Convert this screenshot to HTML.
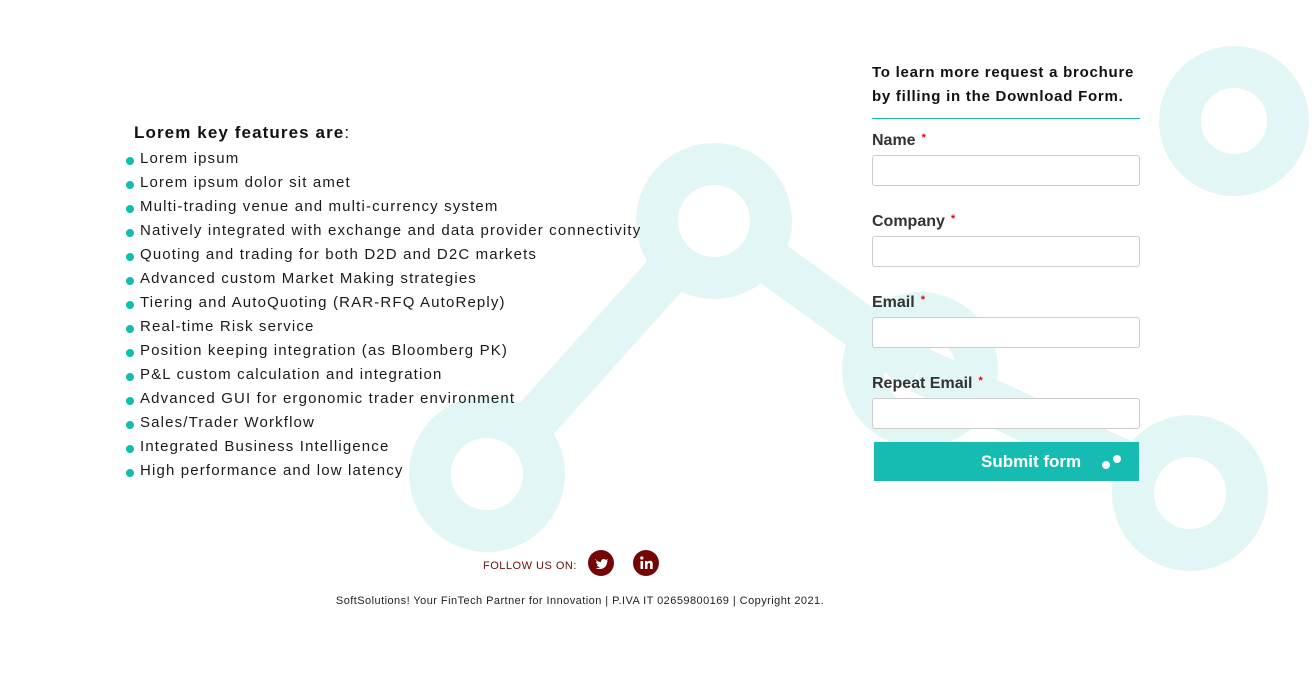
<!DOCTYPE html>
<html><head><meta charset="utf-8"><style>
body{margin:0;width:1312px;height:682px;background:#fff;position:relative;overflow:hidden;font-family:"Liberation Sans",sans-serif}
svg.bg{position:absolute;left:0;top:0}
.feat{position:absolute;left:134px;top:123px;color:#111}
.feat h3{margin:0 0 4px 0;font-size:17px;font-weight:bold;letter-spacing:1.1px}
.feat ul{list-style:none;margin:0;padding:0}
.feat li{font-size:15px;height:24px;line-height:24px;position:relative;padding-left:6px;color:#1a1a1a;letter-spacing:1.15px;white-space:nowrap}
.feat li:before{content:"";position:absolute;left:-8px;top:10px;width:8px;height:8px;border-radius:50%;background:#0fbcb0}
.form{position:absolute;left:872px;top:61px;width:268px}
.form .t{font-size:15px;font-weight:bold;line-height:24px;color:#111;padding-bottom:9px;border-bottom:1px solid #17b9ae;letter-spacing:0.75px;white-space:nowrap}
.lbl{font-size:16px;font-weight:bold;color:#333;margin-top:12px;padding-top:1px;height:22px}
.lbl span{color:#e00;font-size:11px;vertical-align:top;margin-left:6px}
.in{height:29px;border:1px solid #ccc;border-radius:3px;background:#fff;margin-top:1px;margin-bottom:26px}
.btn{position:absolute;left:874px;top:442px;width:265px;height:39px;background:#16bcb2;color:#fff;font-weight:bold;font-size:17px;line-height:39px}
.btn .x{position:absolute;left:107px}
</style></head><body>
<svg class="bg" width="1312" height="682">
<g stroke="#e2f6f5" fill="none">
<line x1="714" y1="221" x2="487" y2="474" stroke-width="46"/>
<line x1="714" y1="221" x2="920" y2="370" stroke-width="46"/>
<line x1="920" y1="370" x2="1190" y2="493" stroke-width="46"/>
<circle cx="714" cy="221" r="57" stroke-width="42"/>
<circle cx="487" cy="474" r="57" stroke-width="42"/>
<circle cx="1234" cy="121" r="54" stroke-width="42"/>
<circle cx="1190" cy="493" r="57" stroke-width="42"/>
<circle cx="920" cy="370" r="57" stroke-width="42"/>
</g>
<circle cx="714" cy="221" r="36" fill="#fff"/>
<circle cx="487" cy="474" r="36" fill="#fff"/>
<circle cx="1190" cy="493" r="36" fill="#fff"/>
</svg>
<div class="feat"><h3>Lorem key features are<span style="font-weight:normal">:</span></h3>
<ul>
<li>Lorem ipsum</li><li>Lorem ipsum dolor sit amet</li><li>Multi-trading venue and multi-currency system</li><li>Natively integrated with exchange and data provider connectivity</li><li>Quoting and trading for both D2D and D2C markets</li><li>Advanced custom Market Making strategies</li><li>Tiering and AutoQuoting (RAR-RFQ AutoReply)</li><li>Real-time Risk service</li><li>Position keeping integration (as Bloomberg PK)</li><li>P&amp;L custom calculation and integration</li><li>Advanced GUI for ergonomic trader environment</li><li>Sales/Trader Workflow</li><li>Integrated Business Intelligence</li><li>High performance and low latency</li>
</ul></div>
<div class="form">
<div class="t">To learn more request a brochure<br>by filling in the Download Form.</div>
<div class="lbl">Name<span>*</span></div><div class="in"></div>
<div class="lbl">Company<span>*</span></div><div class="in"></div>
<div class="lbl">Email<span>*</span></div><div class="in"></div>
<div class="lbl">Repeat Email<span>*</span></div><div class="in"></div>
</div>
<div class="btn"><span class="x">Submit form</span>
<svg style="position:absolute;left:226px;top:12px" width="24" height="16"><circle cx="6" cy="11" r="4" fill="#fff"/><circle cx="17" cy="5" r="4" fill="#fff"/></svg></div>
<div style="position:absolute;left:483px;top:560px;font-size:11px;color:#6b0c0c;letter-spacing:0.5px">FOLLOW US ON:</div>
<svg style="position:absolute;left:588px;top:550px" width="26" height="26"><circle cx="13" cy="13" r="13" fill="#740606"/><path d="M7 9c2 2 4 3 6 3 0-3 3-4 5-2l2-1-1 2 1 0-1 1c0 4-3 7-7 7-2 0-3 0-4-1 2 0 3 0 4-1-2 0-3-1-3-2h1c-1-1-2-2-2-3h1c-1-1-1-2-1-3z" fill="#fff"/></svg>
<svg style="position:absolute;left:633px;top:550px" width="26" height="26"><circle cx="13" cy="13" r="13" fill="#740606"/><rect x="7.5" y="11" width="2.6" height="8" fill="#fff"/><circle cx="8.8" cy="8" r="1.6" fill="#fff"/><path d="M12 11h2.5v1.2c.6-1 1.6-1.4 2.6-1.4 2 0 2.6 1.3 2.6 3.2V19h-2.6v-4.4c0-1-.3-1.6-1.2-1.6s-1.4.7-1.4 1.6V19H12z" fill="#fff"/></svg>
<div style="position:absolute;left:0;width:1160px;top:595px;text-align:center;font-size:11px;color:#222;letter-spacing:0.45px">SoftSolutions! Your FinTech Partner for Innovation | P.IVA IT 02659800169 | Copyright 2021.</div>
</body></html>
